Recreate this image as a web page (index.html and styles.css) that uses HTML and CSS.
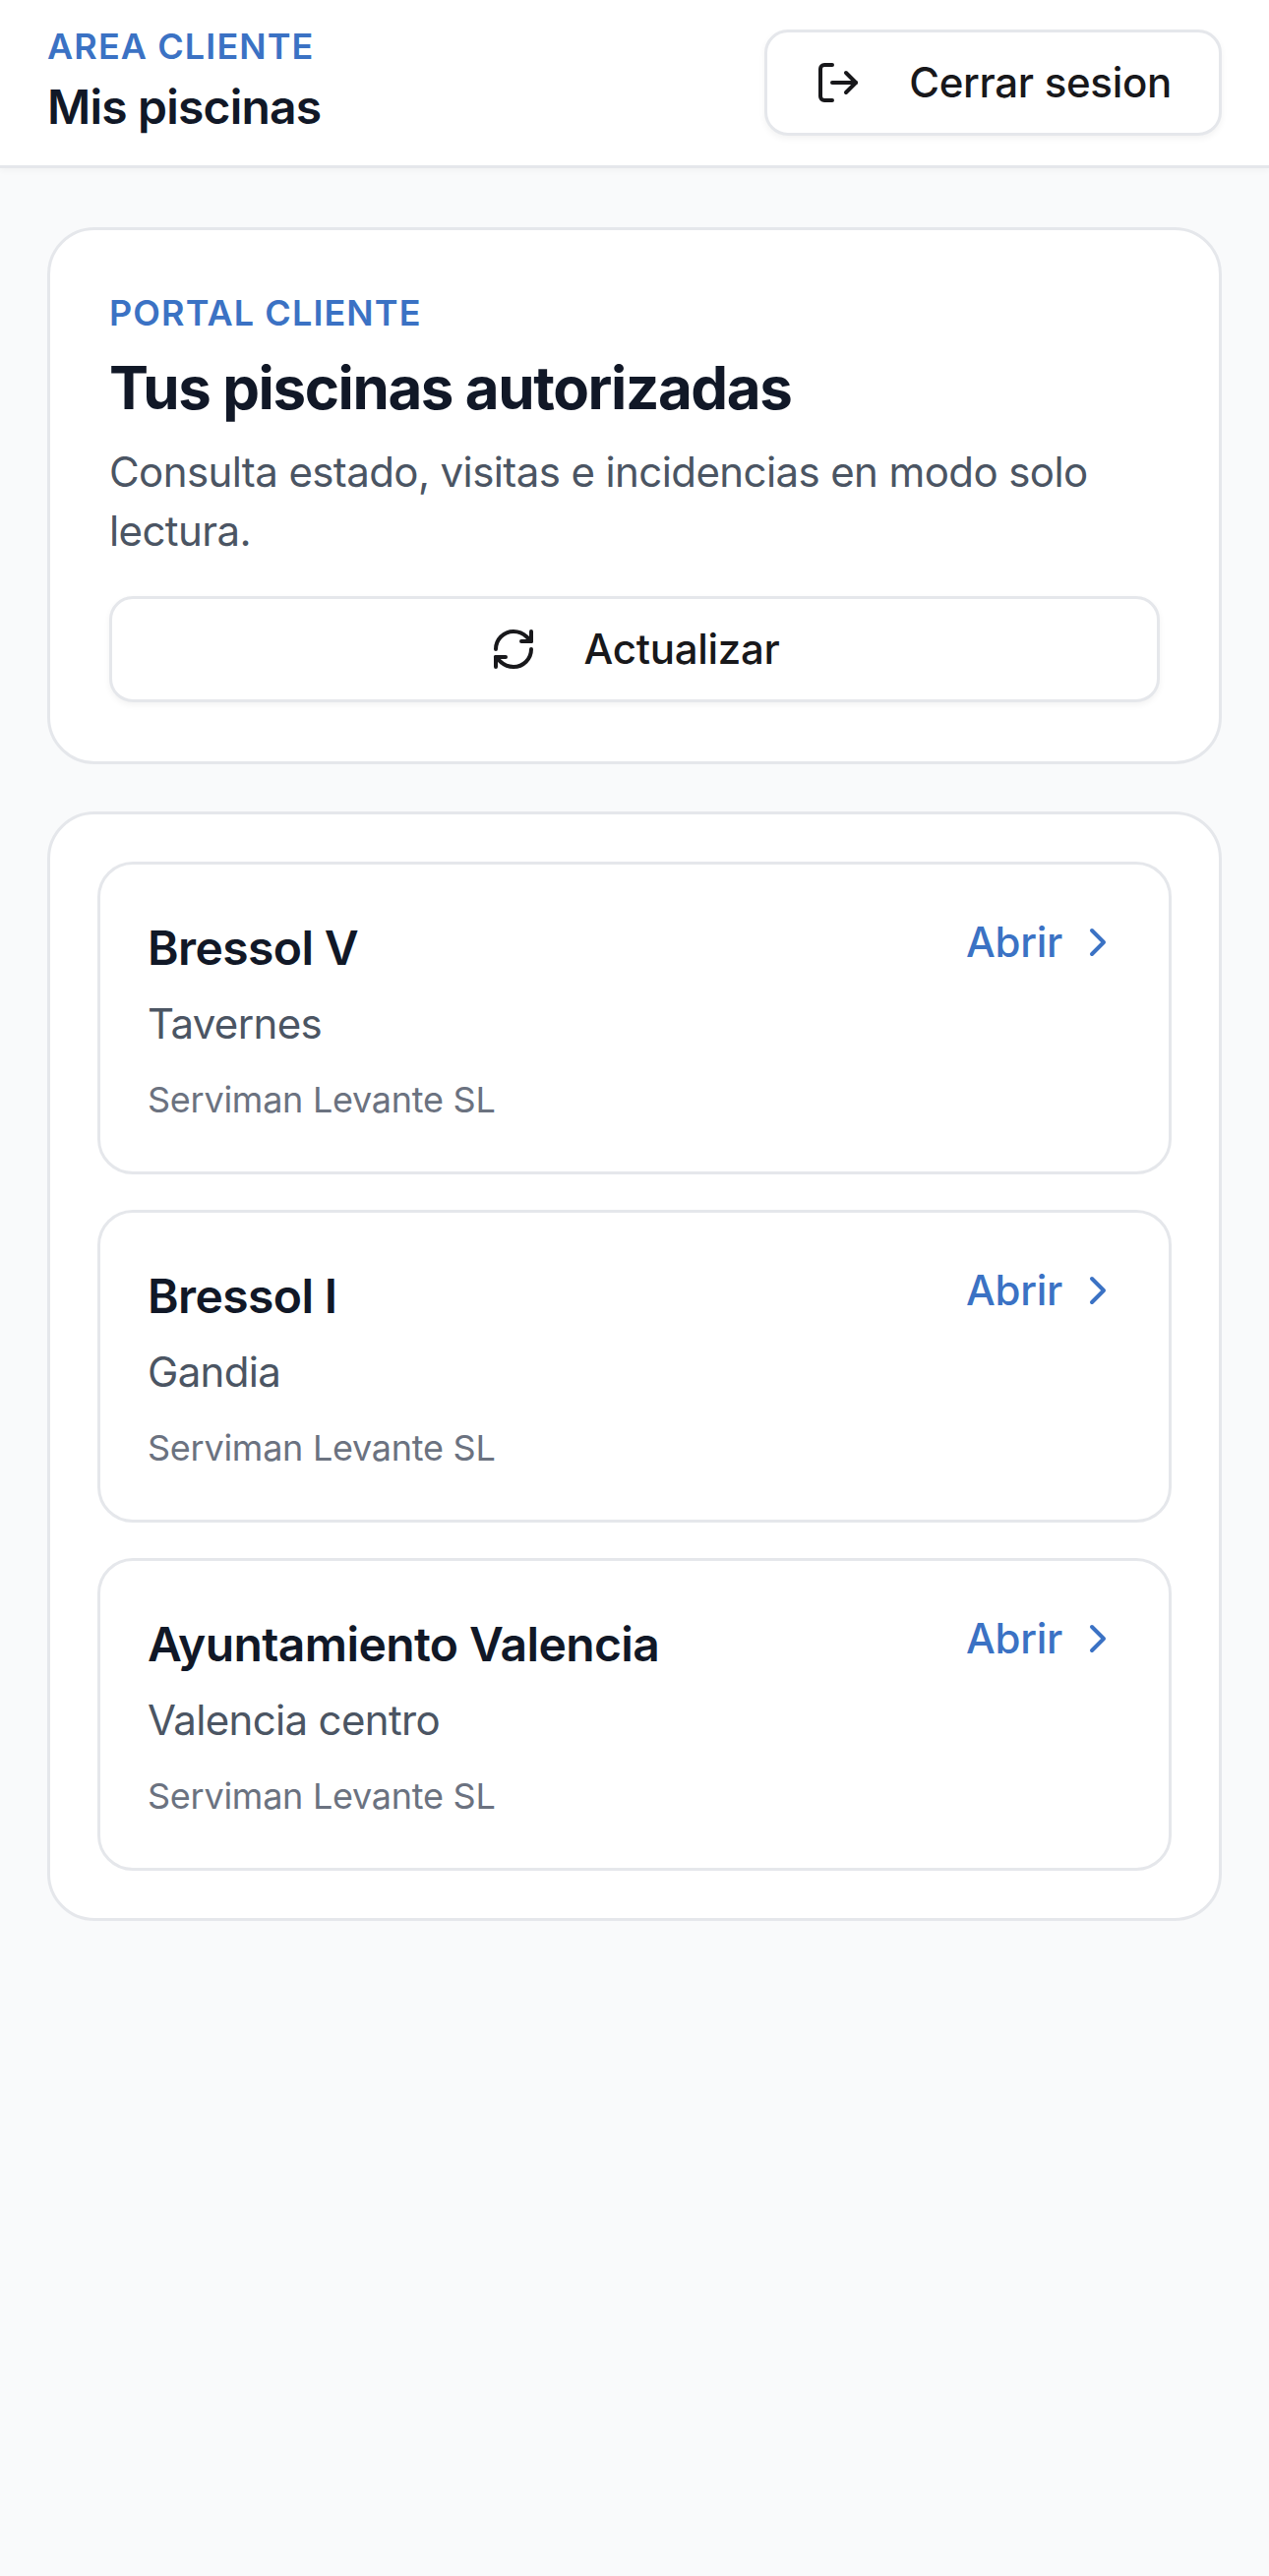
FILE: index.html
```html
<!DOCTYPE html>
<html lang="es">
<head>
    <meta charset="UTF-8">
    <meta name="viewport" content="width=device-width, initial-scale=1.0">
    <title>Mis piscinas</title>
    <link rel="stylesheet" href="styles.css">
</head>
<body>
<!-- Cabecera -->
<header class="topbar">
    <div>
        <p class="eyebrow">AREA CLIENTE</p>
        <h1 class="topbar-title">Mis piscinas</h1>
    </div>
    <a class="btn btn-logout" href="#">
        <svg class="icon" viewBox="0 0 24 24"><path d="M9 21H5a2 2 0 0 1-2-2V5a2 2 0 0 1 2-2h4"/><path d="m16 17 5-5-5-5"/><path d="M21 12H9"/></svg>
        <span class="btn-label">Cerrar sesion</span>
    </a>
</header>

<main class="content">
    <!-- Resumen -->
    <section class="card hero">
        <p class="eyebrow">PORTAL CLIENTE</p>
        <h2 class="hero-title">Tus piscinas autorizadas</h2>
        <p class="hero-text">Consulta estado, visitas e incidencias en modo solo lectura.</p>
        <a class="btn btn-refresh" href="#">
            <svg class="icon" viewBox="0 0 24 24"><path d="M3 12a9 9 0 0 1 9-9 9.75 9.75 0 0 1 6.74 2.74L21 8"/><path d="M21 3v5h-5"/><path d="M21 12a9 9 0 0 1-9 9 9.75 9.75 0 0 1-6.74-2.74L3 16"/><path d="M8 16H3v5"/></svg>
            <span class="btn-label">Actualizar</span>
        </a>
    </section>

    <!-- Lista de piscinas -->
    <section class="card pool-list">
        <article class="pool">
            <div class="pool-head">
                <h3 class="pool-name">Bressol V</h3>
                <a class="pool-open" href="#">Abrir
                    <svg class="icon" viewBox="0 0 24 24"><path d="m9 18 6-6-6-6"/></svg>
                </a>
            </div>
            <p class="pool-place">Tavernes</p>
            <p class="pool-company">Serviman Levante SL</p>
        </article>
        <article class="pool">
            <div class="pool-head">
                <h3 class="pool-name">Bressol I</h3>
                <a class="pool-open" href="#">Abrir
                    <svg class="icon" viewBox="0 0 24 24"><path d="m9 18 6-6-6-6"/></svg>
                </a>
            </div>
            <p class="pool-place">Gandia</p>
            <p class="pool-company">Serviman Levante SL</p>
        </article>
        <article class="pool">
            <div class="pool-head">
                <h3 class="pool-name">Ayuntamiento Valencia</h3>
                <a class="pool-open" href="#">Abrir
                    <svg class="icon" viewBox="0 0 24 24"><path d="m9 18 6-6-6-6"/></svg>
                </a>
            </div>
            <p class="pool-place">Valencia centro</p>
            <p class="pool-company">Serviman Levante SL</p>
        </article>
    </section>
</main>
</body>
</html>
```

FILE: styles.css
```css
/* Estilos generales */
* {
    box-sizing: border-box;
}

body {
    font-family: Inter, "Liberation Sans", sans-serif;
    margin: 0;
    min-height: 100vh;
    background-color: #f9fafb;
    color: #111827;
}

h1, h2, h3, p {
    margin: 0;
}

a {
    text-decoration: none;
}

.icon {
    width: 48px;
    height: 48px;
    flex: none;
    fill: none;
    stroke: currentColor;
    stroke-width: 2;
    stroke-linecap: round;
    stroke-linejoin: round;
}

.eyebrow {
    font-size: 36px;
    line-height: 48px;
    font-weight: 600;
    letter-spacing: 1.1px;
    color: #3b72c4;
}

/* Cabecera */
.topbar {
    display: flex;
    align-items: center;
    justify-content: space-between;
    height: 171px;
    padding: 0 48px;
    background-color: #fff;
    border-bottom: 3px solid #e5e7eb;
    box-shadow: 0 3px 6px rgba(0, 0, 0, 0.03);
}

.topbar-title {
    padding-top: 2px;
    font-size: 48px;
    line-height: 72px;
    font-weight: 600;
    letter-spacing: -0.8px;
}

/* Botones */
.btn {
    display: flex;
    align-items: center;
    justify-content: center;
    gap: 48px;
    height: 108px;
    padding: 0 48px;
    font-size: 42px;
    font-weight: 500;
    letter-spacing: -0.3px;
    color: #18181b;
    background-color: #fff;
    border: 3px solid #e5e7eb;
    border-radius: 24px;
    box-shadow: 0 3px 6px rgba(0, 0, 0, 0.05);
}

.btn-label {
    margin-bottom: 2px;
}

.btn-refresh {
    margin-top: 36px;
}

/* Tarjetas */
.content {
    display: flex;
    flex-direction: column;
    gap: 48px;
    padding: 60px 48px;
}

.card {
    background-color: #fff;
    border: 3px solid #e5e7eb;
    border-radius: 48px;
}

.hero {
    padding: 60px;
}

.hero-title {
    margin-top: 10px;
    font-size: 60px;
    line-height: 84px;
    font-weight: 700;
    letter-spacing: -1.4px;
}

.hero-text {
    margin-top: 14px;
    font-size: 42px;
    line-height: 60px;
    letter-spacing: -0.6px;
    color: #4b5563;
}

.pool-list {
    display: flex;
    flex-direction: column;
    gap: 36px;
    padding: 48px;
}

.pool {
    padding: 48px 48px 46px;
    border: 3px solid #e5e7eb;
    border-radius: 36px;
}

.pool-head {
    display: flex;
    align-items: flex-start;
    justify-content: space-between;
}

.pool-name {
    font-size: 48px;
    line-height: 73px;
    font-weight: 600;
    letter-spacing: -0.6px;
}

.pool-open {
    display: flex;
    align-items: center;
    gap: 12px;
    margin-top: 5px;
    font-size: 42px;
    font-weight: 500;
    letter-spacing: -0.25px;
    color: #3b72c4;
}

.pool-place {
    margin-top: 9px;
    font-size: 42px;
    line-height: 63px;
    letter-spacing: -0.65px;
    color: #4b5563;
}

.pool-company {
    margin-top: 19px;
    font-size: 36px;
    line-height: 54px;
    letter-spacing: -0.26px;
    color: #6b7280;
}
```
